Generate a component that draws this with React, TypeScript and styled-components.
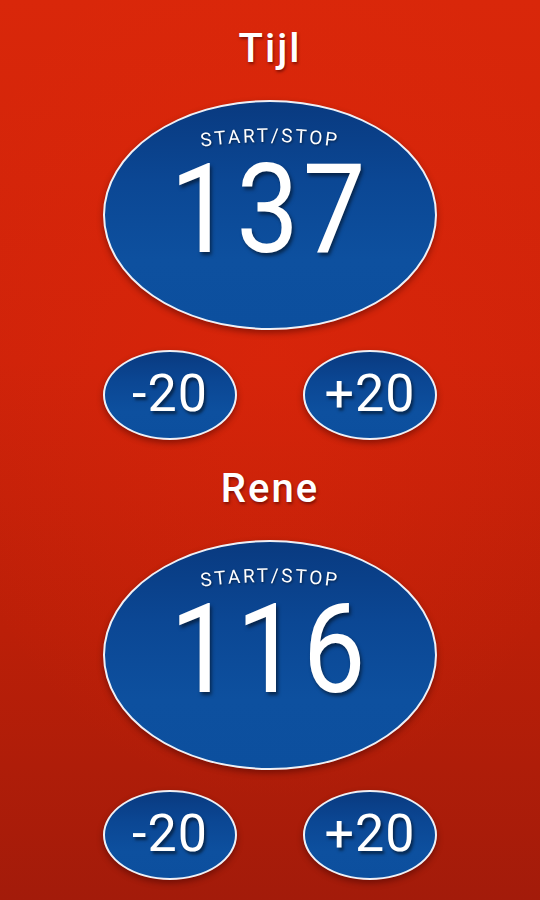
import React, { useState } from "react";
import styled, { createGlobalStyle } from "styled-components";

const GlobalStyle = createGlobalStyle`
  html, body {
    margin: 0;
    padding: 0;
    height: 100%;
  }
  body {
    font-family: Roboto, "Liberation Sans", sans-serif;
  }
`;

const Screen = styled.div`
  width: 540px;
  height: 900px;
  overflow: hidden;
  box-sizing: border-box;
  padding-top: 25px;
  display: flex;
  flex-direction: column;
  align-items: center;
  background:
    radial-gradient(ellipse 90% 70% at 50% 40%, rgba(230, 40, 10, 0.35), rgba(0, 0, 0, 0) 70%),
    linear-gradient(180deg, #d9270a 0%, #cf230a 40%, #bb1f08 70%, #a31b0a 100%);
`;

const Player = styled.section`
  display: flex;
  flex-direction: column;
  align-items: center;
  margin-bottom: 25px;
`;

const Name = styled.h2`
  margin: 0 0 27px;
  font-size: 40px;
  line-height: 48px;
  font-weight: 500;
  letter-spacing: 2px;
  color: #ffffff;
  text-shadow: 1px 2px 3px rgba(60, 0, 0, 0.55);
`;

const Oval = styled.button<{ $w: number; $h: number }>`
  width: ${(p) => p.$w}px;
  height: ${(p) => p.$h}px;
  box-sizing: border-box;
  margin: 0;
  border: 2px solid #eef0f6;
  border-radius: 50%;
  background: linear-gradient(180deg, #093a80 0%, #0b4794 35%, #0d509f 70%, #0c4f9e 100%);
  box-shadow: 0 3px 6px rgba(50, 0, 0, 0.45);
  color: #ffffff;
  font-family: Roboto, "Liberation Sans", sans-serif;
  cursor: pointer;
  padding: 0;
`;

const Timer = styled(Oval)`
  display: flex;
  flex-direction: column;
  align-items: center;
  justify-content: flex-start;
  padding-top: 18px;
`;

const ArcLabel = styled.svg`
  display: block;
  width: 190px;
  height: 30px;
  overflow: visible;

  text {
    font-family: Roboto, "Liberation Sans", sans-serif;
    font-size: 19px;
    font-weight: 400;
    letter-spacing: 2.6px;
    fill: #ffffff;
    filter: drop-shadow(1px 1px 1px rgba(0, 0, 0, 0.45));
  }
`;

const Count = styled.span`
  display: block;
  margin-top: -2px;
  font-size: 124px;
  line-height: 124px;
  font-weight: 400;
  letter-spacing: 4px;
  transform: scaleX(0.9);
  text-shadow: 2px 3px 4px rgba(0, 0, 0, 0.5);
`;

const StepRow = styled.div`
  width: 334px;
  margin-top: 20px;
  display: flex;
  justify-content: space-between;
`;

const Step = styled(Oval)`
  display: flex;
  align-items: center;
  justify-content: center;
  padding-bottom: 3px;
  font-size: 52px;
  line-height: 52px;
  font-weight: 400;
  letter-spacing: 1px;
  text-shadow: 2px 3px 3px rgba(0, 0, 0, 0.5);
`;

interface PlayerClockProps {
  name: string;
  initial: number;
  id: string;
}

const PlayerClock: React.FC<PlayerClockProps> = ({ name, initial, id }) => {
  const [count, setCount] = useState(initial);

  return (
    <Player>
      <Name>{name}</Name>
      <Timer $w={334} $h={230}>
        <ArcLabel viewBox="0 0 190 30">
          <defs>
            <path id={`arc-${id}`} d="M 0 31 Q 95 13 190 31" />
          </defs>
          <text textAnchor="middle">
            <textPath href={`#arc-${id}`} startOffset="50%">
              START/STOP
            </textPath>
          </text>
        </ArcLabel>
        <Count>{count}</Count>
      </Timer>
      <StepRow>
        <Step $w={134} $h={90} onClick={() => setCount((c) => c - 20)}>
          -20
        </Step>
        <Step $w={134} $h={90} onClick={() => setCount((c) => c + 20)}>
          +20
        </Step>
      </StepRow>
    </Player>
  );
};

const App: React.FC = () => {
  return (
    <>
      <GlobalStyle />
      <Screen>
        <PlayerClock id="tijl" name="Tijl" initial={137} />
        <PlayerClock id="rene" name="Rene" initial={116} />
      </Screen>
    </>
  );
};

export default App;
